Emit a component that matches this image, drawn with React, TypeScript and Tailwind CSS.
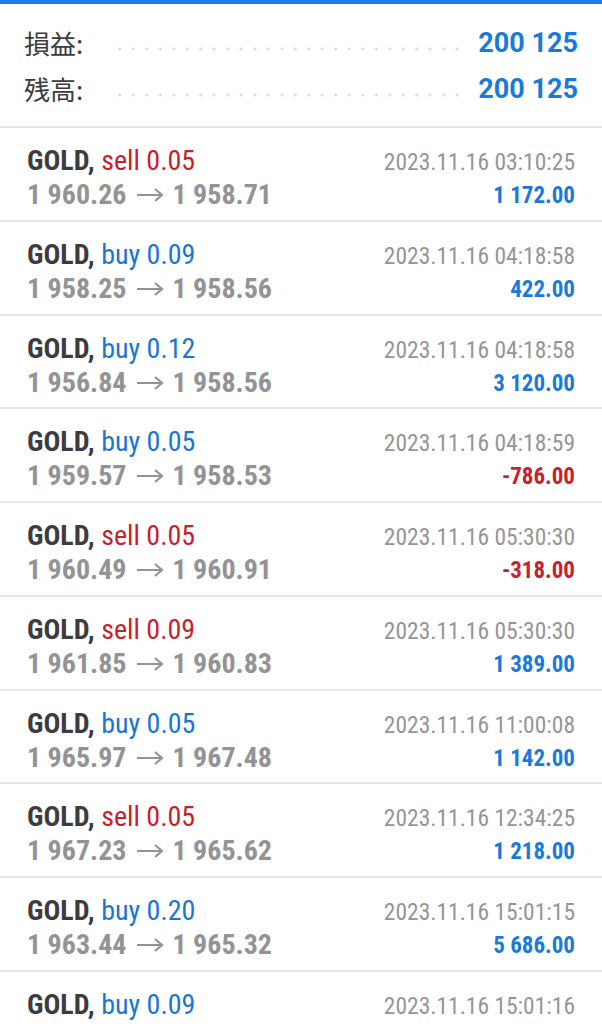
import React from 'react';

type Deal = {
  side: 'buy' | 'sell';
  volume: string;
  open: string;
  close: string;
  time: string;
  profit: string;
};

const deals: Deal[] = [
  { side: 'sell', volume: '0.05', open: '1 960.26', close: '1 958.71', time: '2023.11.16 03:10:25', profit: '1 172.00' },
  { side: 'buy', volume: '0.09', open: '1 958.25', close: '1 958.56', time: '2023.11.16 04:18:58', profit: '422.00' },
  { side: 'buy', volume: '0.12', open: '1 956.84', close: '1 958.56', time: '2023.11.16 04:18:58', profit: '3 120.00' },
  { side: 'buy', volume: '0.05', open: '1 959.57', close: '1 958.53', time: '2023.11.16 04:18:59', profit: '-786.00' },
  { side: 'sell', volume: '0.05', open: '1 960.49', close: '1 960.91', time: '2023.11.16 05:30:30', profit: '-318.00' },
  { side: 'sell', volume: '0.09', open: '1 961.85', close: '1 960.83', time: '2023.11.16 05:30:30', profit: '1 389.00' },
  { side: 'buy', volume: '0.05', open: '1 965.97', close: '1 967.48', time: '2023.11.16 11:00:08', profit: '1 142.00' },
  { side: 'sell', volume: '0.05', open: '1 967.23', close: '1 965.62', time: '2023.11.16 12:34:25', profit: '1 218.00' },
  { side: 'buy', volume: '0.20', open: '1 963.44', close: '1 965.32', time: '2023.11.16 15:01:15', profit: '5 686.00' },
  { side: 'buy', volume: '0.09', open: '1 960.34', close: '1 965.27', time: '2023.11.16 15:01:16', profit: '4 437.00' },
];

function SummaryRow({ label, value }: { label: string; value: string }) {
  return (
    <div className="flex items-center h-[46px]">
      <span className="text-[26px] leading-none text-[#3c3c3e] font-['Noto_Sans_CJK_JP',sans-serif]">{label}</span>
      {/* dot leader */}
      <div className="flex-1 ml-[30px] mr-[17px] mt-[12px] h-[4px] bg-[radial-gradient(circle,#dadada_1.3px,transparent_1.7px)] bg-[length:13.5px_4px] bg-repeat-x" />
      <span className="text-[27px] leading-none font-bold text-[#1a7ad9]">{value}</span>
    </div>
  );
}

function Arrow() {
  return (
    <svg width="28" height="16" viewBox="0 0 28 16" className="inline-block mx-[9px] -mt-[3px]">
      <path d="M1 8H26M19 2L26 8L19 14" fill="none" stroke="#939396" strokeWidth="2.2" />
    </svg>
  );
}

function DealRow({ deal }: { deal: Deal }) {
  const sideColor = deal.side === 'sell' ? 'text-[#c9212b]' : 'text-[#1a76d2]';
  const loss = deal.profit.startsWith('-');
  return (
    <div className="flex justify-between border-b-2 border-[#e6e6e6] px-[27px] pt-[16px] h-[93.75px] [font-stretch:condensed]">
      <div className="flex flex-col">
        <div className="text-[28px] leading-[34px]">
          <span className="font-bold text-[#3c3c40]">GOLD,</span>{' '}
          <span className={sideColor}>
            {deal.side} {deal.volume}
          </span>
        </div>
        <div className="text-[28px] leading-[34px] font-bold text-[#939396] whitespace-nowrap">
          {deal.open}
          <Arrow />
          {deal.close}
        </div>
      </div>
      <div className="flex flex-col items-end pt-[2px]">
        <div className="text-[23.5px] leading-[32px] text-[#959598]">{deal.time}</div>
        <div className={`text-[23px] leading-[32px] mt-[2px] font-bold ${loss ? 'text-[#c9212b]' : 'text-[#1a7ad9]'}`}>
          {deal.profit}
        </div>
      </div>
    </div>
  );
}

export default function App() {
  return (
    <div className="w-[602px] h-[1024px] overflow-hidden bg-white font-['Roboto',sans-serif]">
      <div className="h-[4px] bg-[#1a7fe8]" />
      <div className="px-[24px] pt-[16px] h-[124px] border-b-2 border-[#e6e6e6]">
        <SummaryRow label="損益:" value="200 125" />
        <SummaryRow label="残高:" value="200 125" />
      </div>
      {deals.map((d, i) => (
        <DealRow key={i} deal={d} />
      ))}
    </div>
  );
}
